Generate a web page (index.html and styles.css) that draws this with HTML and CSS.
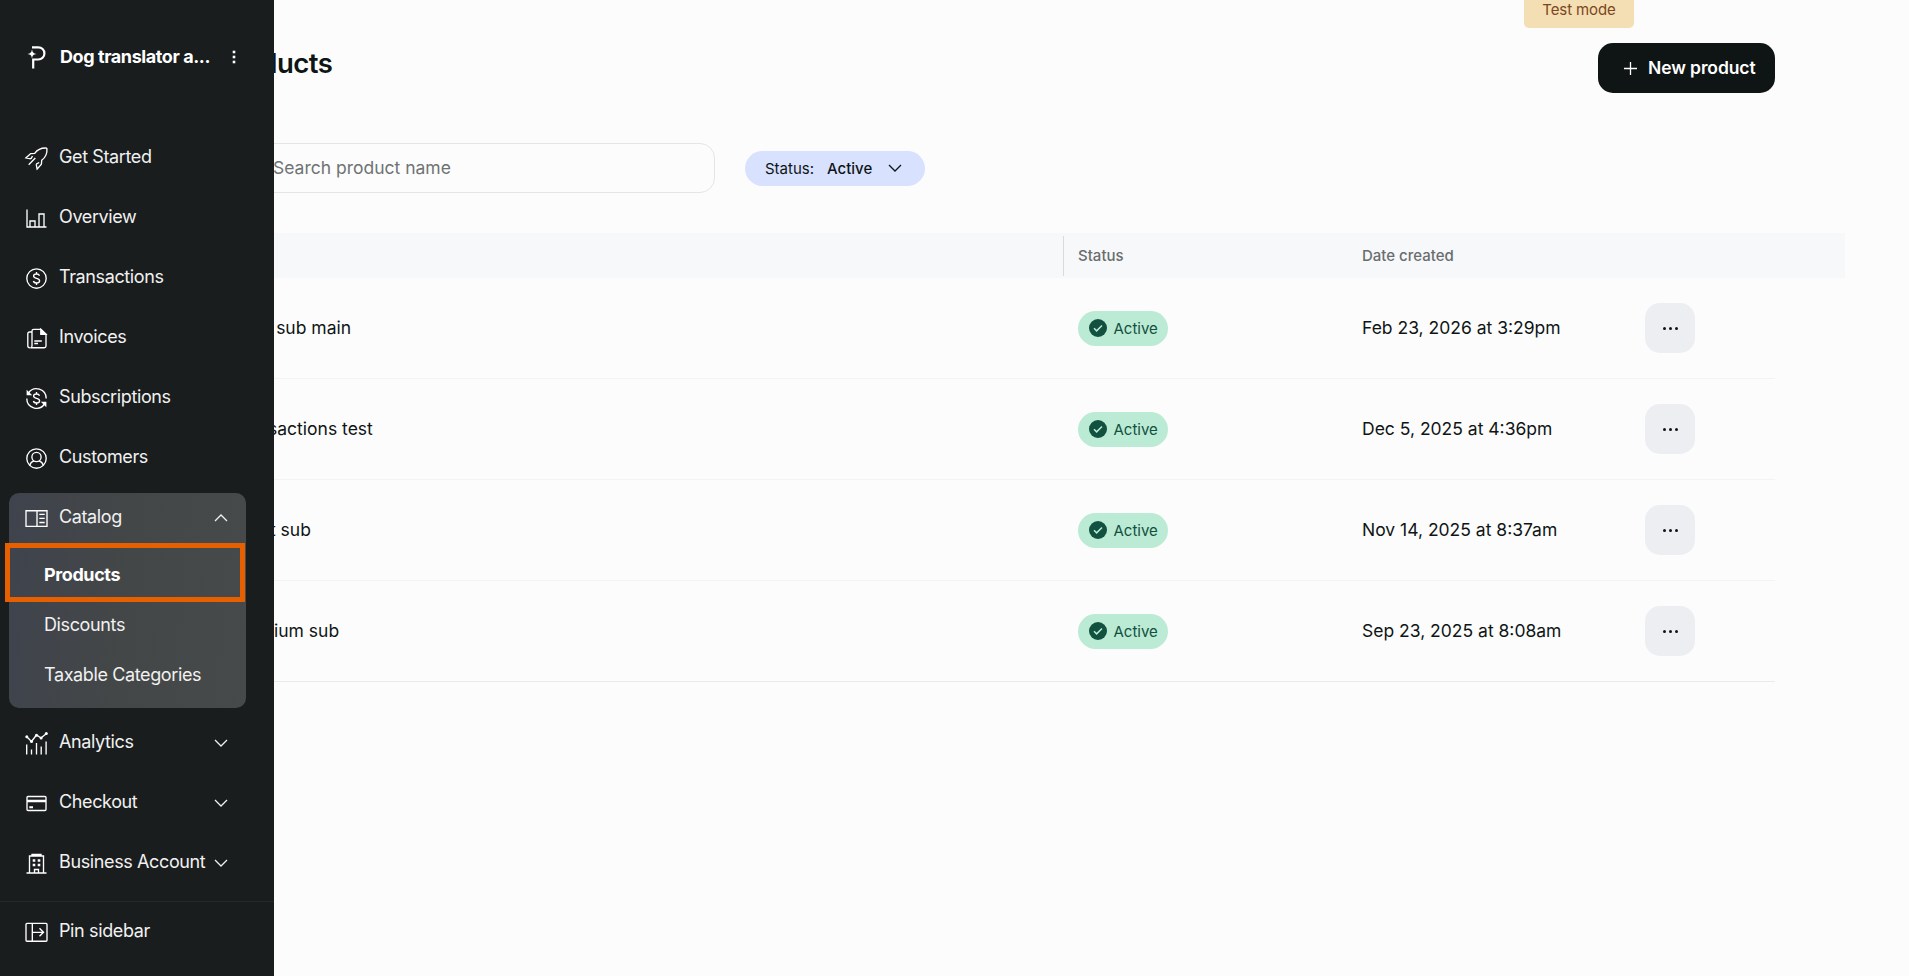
FILE: index.html
```html
<!DOCTYPE html>
<html lang="en">
<head>
  <meta charset="UTF-8">
  <meta name="viewport" content="width=device-width, initial-scale=1.0">
  <title>Products</title>
  <link rel="stylesheet" href="styles.css">
</head>
<body>
  <aside class="sidebar">
    <div class="brand">
      <svg class="logo" width="18" height="24" viewBox="0 0 18 24" fill="none" stroke="#fff" stroke-width="2.2">
        <path d="M4 2.3h6.300a6.100 6.100 0 0 1 0 12.200H5.200V23.500"/>
        <path d="M4 4.300c.5 3.300 1.300 4.100 4.600 4.600-3.300.5-4.100 1.300-4.600 4.600-.5-3.300-1.300-4.100-4.600-4.600 3.300-.5 4.100-1.300 4.600-4.600z" fill="#fff" stroke="none"/>
      </svg>
      <span class="brand-name">Dog translator a...</span>
      <svg class="kebab" width="4" height="14" viewBox="0 0 4 14" fill="#fff">
        <rect x="0.700" y="0.700" width="2.600" height="2.600"/>
        <rect x="0.700" y="5.700" width="2.600" height="2.600"/>
        <rect x="0.700" y="10.700" width="2.600" height="2.600"/>
      </svg>
    </div>

    <nav class="nav">
      <a class="nav-item">
        <svg class="icon" viewBox="0 0 24 24"><path d="M22.400 1.600c-5-.5-9 1-12.200 5.200l-4 .3L1.400 11.400l5 .9M22.400 1.600c.5 5-1 9-5.200 12.200l-.3 4L12.600 22.600l-.9-5M6.400 12.300l1.600-2.800M11.700 17.600l3-1.600M10.800 11.500 4.200 18.200"/></svg>
        <span>Get Started</span>
      </a>
      <a class="nav-item">
        <svg class="icon" viewBox="0 0 24 24"><path d="M2.500 3v17.500H22M5.500 20.500v-6h5v6M14.500 20.500V7.500h5v13"/></svg>
        <span>Overview</span>
      </a>
      <a class="nav-item">
        <svg class="icon" viewBox="0 0 24 24"><circle cx="12" cy="12" r="9.700"/><path d="M15 9.200c-.4-1.200-1.500-1.700-3-1.700-1.700 0-2.900.8-2.900 2.100 0 3 6 1.600 6 4.700 0 1.400-1.300 2.200-3.100 2.200-1.600 0-2.800-.7-3.100-2M12 5.500v2M12 16.500v2"/></svg>
        <span>Transactions</span>
      </a>
      <a class="nav-item">
        <svg class="icon" viewBox="0 0 24 24"><path d="M16.500 2.800H9.200c-1 0-1.700.7-1.700 1.700v15c0 1-.7 1.700-1.700 1.700h14c1 0 1.700-.7 1.700-1.700V7.800zM7.500 5.500H5c-1 0-1.700.7-1.700 1.700v12.300c0 1 .9 1.700 2.100 1.700M9.800 14.500h7.500M9.800 17h3.700"/><path d="M16.300 2.800v5h5.200z" fill="#fff"/></svg>
        <span>Invoices</span>
      </a>
      <a class="nav-item">
        <svg class="icon" viewBox="0 0 24 24"><path d="M4 6.500a9.700 9.700 0 0 1 17.700 5.500M20 17.500A9.700 9.700 0 0 1 2.300 12M15 9.200c-.4-1.200-1.500-1.700-3-1.700-1.700 0-2.900.8-2.900 2.100 0 3 6 1.600 6 4.700 0 1.400-1.300 2.200-3.100 2.200-1.600 0-2.800-.7-3.100-2M12 5.500v2M12 16.500v2"/><path d="M2.800 4.800v3.300h3.300zM21.200 19.200v-3.300h-3.300z" fill="#fff"/></svg>
        <span>Subscriptions</span>
      </a>
      <a class="nav-item">
        <svg class="icon" viewBox="0 0 24 24"><circle cx="12" cy="12" r="9.700"/><circle cx="12" cy="10.500" r="4.600"/><path d="M5.200 19c.6-2.500 2-4 4.300-4.600M18.800 19c-.6-2.500-2-4-4.300-4.600"/></svg>
        <span>Customers</span>
      </a>

      <div class="nav-group">
        <a class="nav-item">
          <svg class="icon" viewBox="0 0 24 24"><path d="M1.500 4.200h21v15.600h-21zM12.500 4.200v15.600M14.800 7.800h5.400M14.800 11.900h5.400M14.800 16h5.400"/></svg>
          <span>Catalog</span>
          <svg class="chevron" viewBox="0 0 14 8"><path d="M1 7l6-6 6 6"/></svg>
        </a>
        <a class="sub-item active">Products</a>
        <a class="sub-item">Discounts</a>
        <a class="sub-item">Taxable Categories</a>
        <div class="highlight"></div>
      </div>

      <a class="nav-item">
        <svg class="icon" viewBox="0 0 24 24"><path d="M2 5l5 5 5-6.500 4.500 3L22 2M2.200 13v10M7 18v5M12 11.500V23M16.700 15v8M21.600 10v13"/><g fill="#fff" stroke="none"><circle cx="2.300" cy="5.200" r="1.500"/><circle cx="7" cy="10" r="1.500"/><circle cx="12" cy="3.800" r="1.500"/><circle cx="16.600" cy="6.500" r="1.500"/><circle cx="21.800" cy="2" r="1.500"/></g></svg>
        <span>Analytics</span>
        <svg class="chevron" viewBox="0 0 14 8"><path d="M1 1l6 6 6-6"/></svg>
      </a>
      <a class="nav-item">
        <svg class="icon" viewBox="0 0 24 24"><rect x="2.500" y="5" width="19" height="14" rx="1"/><path d="M2.500 9.500h19" stroke-width="2.400"/><path d="M4.800 15.800h3.700" stroke-width="2"/></svg>
        <span>Checkout</span>
        <svg class="chevron" viewBox="0 0 14 8"><path d="M1 1l6 6 6-6"/></svg>
      </a>
      <a class="nav-item">
        <svg class="icon" viewBox="0 0 24 24"><path d="M2 21.500h20M5 21.500V4.500h14v17M7.500 4.500v-1.500h9v1.500M10 21.500v-3.500h4v3.500"/><path d="M8.200 9h2.600M13.200 9h2.600M8.200 13.500h2.600M13.200 13.500h2.600" stroke-width="2.600"/></svg>
        <span>Business Account</span>
        <svg class="chevron" viewBox="0 0 14 8"><path d="M1 1l6 6 6-6"/></svg>
      </a>
    </nav>

    <div class="pin">
      <a class="nav-item">
        <svg class="icon" viewBox="0 0 24 24"><rect x="1.500" y="2.900" width="21" height="17.800" rx="1"/><path d="M7.800 2.900v17.800M7.800 11.800h11M15 7.800l4 4-4 4"/></svg>
        <span>Pin sidebar</span>
      </a>
    </div>
  </aside>

  <main class="page">
    <div class="test-mode">Test mode</div>

    <header class="page-header">
      <h1>Products</h1>
      <button class="new-product">
        <svg width="13" height="13" viewBox="0 0 13 13" stroke="#fff" stroke-width="1.300"><path d="M6.500 0v13M0 6.500h13"/></svg>
        <span>New product</span>
      </button>
    </header>

    <div class="filters">
      <div class="search">Search product name</div>
      <div class="status-filter">
        <span>Status:</span>
        <span class="value">Active</span>
        <svg class="chevron" viewBox="0 0 14 8"><path d="M1 1l6 6 6-6"/></svg>
      </div>
    </div>

    <section class="table">
      <div class="table-head">
        <div class="col-name"></div>
        <div class="col-status">Status</div>
        <div class="col-date">Date created</div>
      </div>
      <div class="row">
        <div class="col-name">Main sub main</div>
        <div class="col-status"><span class="badge"><svg width="18" height="18" viewBox="0 0 18 18"><circle cx="9" cy="9" r="9"/><path d="M5 9.300l2.600 2.600L13 6.500"/></svg>Active</span></div>
        <div class="col-date">Feb 23, 2026 at 3:29pm</div>
        <button class="more"><i></i><i></i><i></i></button>
      </div>
      <div class="row">
        <div class="col-name">Transactions test</div>
        <div class="col-status"><span class="badge"><svg width="18" height="18" viewBox="0 0 18 18"><circle cx="9" cy="9" r="9"/><path d="M5 9.300l2.600 2.600L13 6.500"/></svg>Active</span></div>
        <div class="col-date">Dec 5, 2025 at 4:36pm</div>
        <button class="more"><i></i><i></i><i></i></button>
      </div>
      <div class="row">
        <div class="col-name">Short sub</div>
        <div class="col-status"><span class="badge"><svg width="18" height="18" viewBox="0 0 18 18"><circle cx="9" cy="9" r="9"/><path d="M5 9.300l2.600 2.600L13 6.500"/></svg>Active</span></div>
        <div class="col-date">Nov 14, 2025 at 8:37am</div>
        <button class="more"><i></i><i></i><i></i></button>
      </div>
      <div class="row last">
        <div class="col-name">Premium sub</div>
        <div class="col-status"><span class="badge"><svg width="18" height="18" viewBox="0 0 18 18"><circle cx="9" cy="9" r="9"/><path d="M5 9.300l2.600 2.600L13 6.500"/></svg>Active</span></div>
        <div class="col-date">Sep 23, 2025 at 8:08am</div>
        <button class="more"><i></i><i></i><i></i></button>
      </div>
    </section>
  </main>
</body>
</html>
```
FILE: styles.css
```css
* {
  box-sizing: border-box;
}
body {
  margin: 0;
  height: 976px;
  overflow: hidden;
  background: #fcfcfc;
  color: #0f1515;
  font-family: Inter, "Liberation Sans", sans-serif;
  font-size: 17.5px;
}
button {
  border: none;
  font-family: inherit;
}

/* Sidebar */
.sidebar {
  position: fixed;
  top: 0;
  left: 0;
  z-index: 10;
  display: flex;
  flex-direction: column;
  width: 274px;
  height: 976px;
  background: #1a1d1e;
  color: #f1f1f1;
  font-size: 18px;
  letter-spacing: -0.38px;
}
.brand {
  display: flex;
  align-items: center;
  height: 114px;
  padding: 0 38px 0 28px;
}
.logo {
  overflow: visible;
}
.brand-name {
  margin-left: 14px;
  padding-bottom: 2px;
  color: #fff;
  font-weight: 700;
  letter-spacing: -0.42px;
  white-space: nowrap;
}
.kebab {
  margin-left: auto;
}
.nav {
  display: flex;
  flex-direction: column;
  gap: 12px;
  margin-top: 19px;
  padding: 0 28px 0 9px;
}
.nav-item {
  display: flex;
  align-items: center;
  height: 48px;
  padding: 2px 18px 0 15px;
}
.nav-item span {
  margin-left: 11px;
  padding-bottom: 4px;
  white-space: nowrap;
}
.icon {
  flex: none;
  width: 24px;
  height: 24px;
  fill: none;
  stroke: #fff;
  stroke-width: 1.35;
  transform: translate(0.5px, 0.5px);
}
.chevron {
  flex: none;
  width: 14px;
  height: 8px;
  margin-left: auto;
  fill: none;
  stroke: currentColor;
  stroke-width: 1.3;
}
.nav-group {
  position: relative;
  height: 215px;
  margin-bottom: -2px;
  border-radius: 10px;
  background: linear-gradient(95deg, #3f434d, #444747 50%, #474a4a);
}
.sub-item {
  display: flex;
  align-items: center;
  height: 50px;
  padding: 0 0 2px 35px;
}
.nav-group .nav-item {
  margin-bottom: 9px;
}
.sub-item.active {
  color: #fff;
  font-weight: 700;
  letter-spacing: -0.4px;
}
.highlight {
  position: absolute;
  top: 50px;
  left: -4px;
  width: 240px;
  height: 59px;
  border: 5px solid #e85f00;
}
.pin {
  margin-top: 15px;
  padding: 5px 9px;
  border-top: 1px solid #25292a;
}

/* Page */
.page {
  padding: 0 134px 0 212px;
}
.test-mode {
  width: 110px;
  height: 28px;
  margin-left: 1312px;
  border-radius: 0 0 5px 5px;
  background: #f4deb3;
  color: #7c461e;
  font-size: 15px;
  letter-spacing: -0.1px;
  line-height: 20px;
  text-align: center;
}
.page-header {
  display: flex;
  justify-content: space-between;
  margin-top: 15px;
}
h1 {
  margin: 2px 0 0;
  padding-left: 5px;
  font-size: 27.5px;
  font-weight: 600;
  letter-spacing: -0.5px;
  line-height: 36px;
}
.new-product {
  display: flex;
  align-items: center;
  gap: 11px;
  width: 177px;
  height: 50px;
  padding: 0 0 0 26px;
  border-radius: 15px;
  background: #0f1515;
  color: #fff;
  font-size: 17.5px;
  font-weight: 600;
  letter-spacing: -0.1px;
  white-space: nowrap;
}
.new-product span {
  padding-bottom: 2px;
}
.filters {
  display: flex;
  align-items: center;
  gap: 30px;
  margin-top: 50px;
}
.search {
  width: 503px;
  height: 50px;
  padding-left: 60px;
  border: 1px solid #e3e5e8;
  border-radius: 15px;
  color: #6f7373;
  line-height: 48px;
}
.status-filter {
  display: flex;
  align-items: center;
  width: 180px;
  height: 35px;
  padding: 0 23px 0 20px;
  border-radius: 18px;
  background: #d8e2ff;
  font-size: 15px;
}
.status-filter .value {
  margin-left: 13px;
  font-weight: 500;
}

/* Products table */
.table {
  margin-top: 40px;
}
.table-head,
.row {
  display: grid;
  grid-template-columns: 852px 298px 283px 50px;
  align-items: center;
}
.table-head {
  height: 45px;
  margin-right: -70px;
  background: #f7f8fa;
  color: #696d6d;
  font-size: 15px;
  font-weight: 500;
}
.row {
  height: 101px;
  border-bottom: 1px solid #f3f3f4;
}
.row.last {
  border-color: #e9eaeb;
}
.col-name {
  padding-left: 19px;
}
.row .col-name,
.row .col-date {
  padding-bottom: 2px;
}
.table-head .col-name {
  height: 40px;
  border-right: 1px solid #d8dadc;
}
.col-status {
  padding-left: 14px;
}
.badge {
  display: flex;
  align-items: center;
  gap: 6.5px;
  width: 90px;
  height: 35px;
  padding-left: 11px;
  border-radius: 18px;
  background: #bbebd4;
  color: #12503f;
  font-size: 15px;
}
.badge circle {
  fill: #12503f;
}
.badge path {
  fill: none;
  stroke: #bbebd4;
  stroke-width: 1.5;
}
.more {
  display: flex;
  align-items: center;
  justify-content: center;
  gap: 3px;
  width: 50px;
  height: 50px;
  border-radius: 15px;
  background: #edeef2;
}
.more i {
  width: 3px;
  height: 3px;
  border-radius: 50%;
  background: #0f1515;
}
```
